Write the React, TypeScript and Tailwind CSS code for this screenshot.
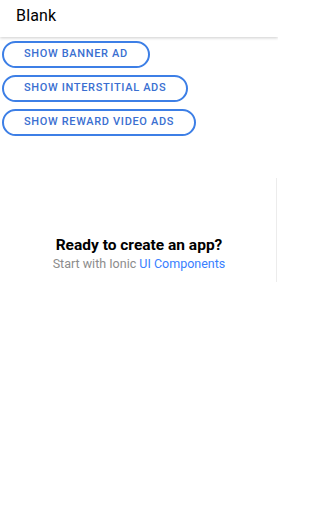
export default function App() {
  const buttons = ['Show Banner Ad', 'Show Interstitial Ads', 'Show Reward Video Ads'];

  return (
    <div className="w-[278px] h-[512px] bg-white flex flex-col overflow-hidden font-['Roboto',sans-serif]">
      <header className="h-[37px] shrink-0 flex items-center pb-[6px] px-4 bg-white shadow-[0_1px_3px_rgba(0,0,0,0.2)] relative z-10">
        <h1 className="text-[16px] text-black tracking-[0.01em]">Blank</h1>
      </header>

      <main className="flex-1 flex flex-col relative">
        <div className="flex flex-col items-start gap-[7px] pt-[4px] px-[2px]">
          {buttons.map((label) => (
            <button
              key={label}
              className="h-[27px] px-[20px] rounded-full border-2 border-[#3d7fe6] text-[#3a6fd1] text-[11px] font-medium uppercase tracking-[0.06em] bg-white"
            >
              {label}
            </button>
          ))}
        </div>

        <div className="flex flex-col items-center mt-[99px]">
          <strong className="text-[15.5px] font-bold text-black leading-[20px]">
            Ready to create an app?
          </strong>
          <p className="text-[12.5px] text-[#8c8c8c] leading-[16px] mt-[1px]">
            Start with Ionic{' '}
            <a className="text-[#3880ff]">UI Components</a>
          </p>
        </div>

        <div className="absolute right-[1px] top-[141px] w-[1px] h-[104px] bg-[#ececec]" />
      </main>
    </div>
  );
}
